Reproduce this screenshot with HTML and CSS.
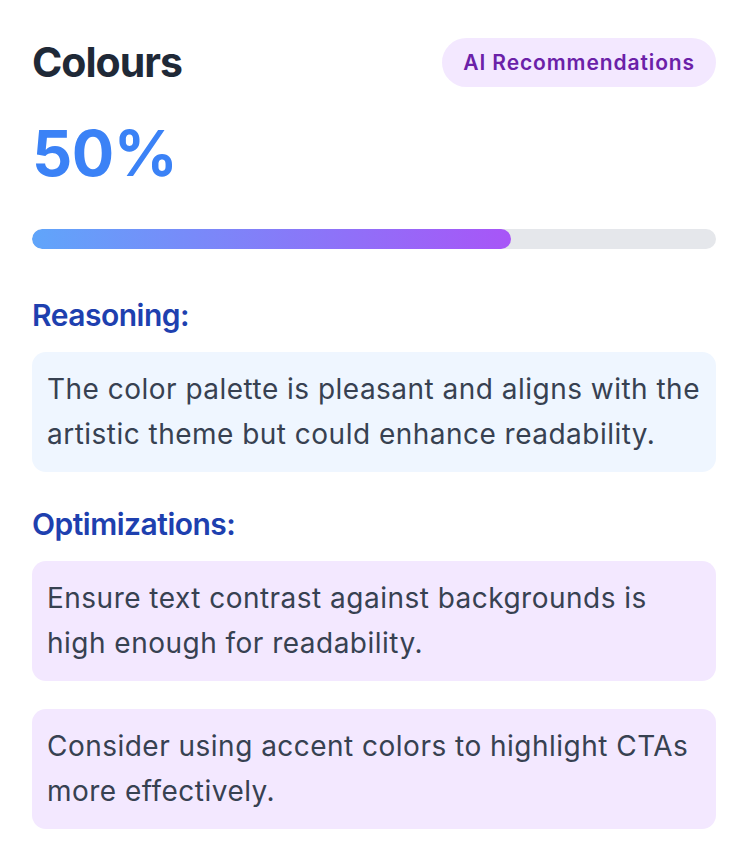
FILE: index.html
```html
<!DOCTYPE html>
<html lang="en">

<head>
  <meta charset="UTF-8">
  <meta name="viewport" content="width=device-width, initial-scale=1.0">
  <title>Colours</title>
  <link rel="stylesheet" href="styles.css">
</head>

<body>
  <div class="score-card">
    <div class="card-header">
      <h1>Colours</h1>
      <span class="badge">AI Recommendations</span>
    </div>
    <div class="score">50%</div>
    <div class="progress">
      <div class="progress-fill" style="width: 70%;"></div>
    </div>

    <h2>Reasoning:</h2>
    <div class="note note-blue">
      The color palette is pleasant and aligns with the artistic theme but could enhance readability.
    </div>

    <h2>Optimizations:</h2>
    <div class="tips">
      <div class="note note-purple">Ensure text contrast against backgrounds is high enough for readability.</div>
      <div class="note note-purple">Consider using accent colors to highlight CTAs more effectively.</div>
    </div>
  </div>
</body>

</html>
```

FILE: styles.css
```css
body {
  margin: 0;
  font-family: Inter, "Noto Sans", sans-serif;
  background: #ffffff;
  color: #374151;
}

.score-card {
  padding: 34px 34px 32px 32px;
}

.card-header {
  display: flex;
  justify-content: space-between;
  align-items: center;
}

.card-header h1 {
  margin: 0;
  font-size: 41px;
  line-height: 56px;
  font-weight: 700;
  letter-spacing: -1px;
  color: #1f2937;
}

.badge {
  background-color: #f3e8ff;
  color: #6b21a8;
  font-size: 21px;
  line-height: 35px;
  font-weight: 600;
  padding: 7px 21px;
  border-radius: 999px;
  letter-spacing: 0.9px;
}

.score {
  margin-top: 28px;
  font-size: 63px;
  line-height: 70px;
  font-weight: 700;
  letter-spacing: -0.5px;
  color: #3b82f6;
}

.progress {
  margin-top: 41px;
  height: 20px;
  border-radius: 999px;
  background-color: #e5e7eb;
  overflow: hidden;
}

.progress-fill {
  height: 100%;
  border-radius: 999px;
  background: linear-gradient(90deg, #60a5fa, #a855f7);
}

h2 {
  margin: 42px 0 12px;
  font-size: 30px;
  line-height: 49px;
  font-weight: 600;
  letter-spacing: -0.5px;
  color: #1e40af;
}

.note {
  padding: 14.5px 15px;
  border-radius: 14px;
  font-size: 28px;
  line-height: 45.5px;
  letter-spacing: 0.48px;
  color: #374151;
}

.note-blue {
  background-color: #eff6ff;
}

.note + h2 {
  margin-top: 28px;
}

.tips {
  display: flex;
  flex-direction: column;
  gap: 28px;
}

.note-purple {
  background-color: #f3e8ff;
}
```
